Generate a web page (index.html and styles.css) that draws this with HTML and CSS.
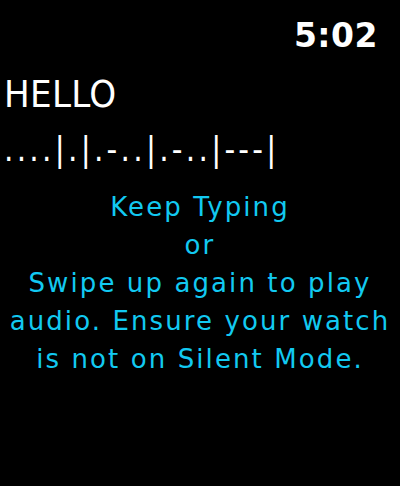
FILE: index.html
```html
<!DOCTYPE html>
<html>
<head>
<meta charset="utf-8">
<link rel="stylesheet" href="styles.css">
</head>
<body>
<div class="screen">
  <div class="status"><span class="time">5:02</span></div>
  <div class="word">HELLO</div>
  <div class="morse">....|.|.-..|.-..|---|</div>
  <div class="hint">
    <div>Keep Typing</div>
    <div>or</div>
    <div>Swipe up again to play</div>
    <div>audio. Ensure your watch</div>
    <div>is not on Silent Mode.</div>
  </div>
</div>
</body>
</html>
```
FILE: styles.css
```css
html, body {
  margin: 0;
  padding: 0;
  background: #000;
}
.screen {
  width: 400px;
  height: 486px;
  background: #000;
  color: #fff;
  font-family: "DejaVu Sans Condensed", "DejaVu Sans", sans-serif;
  overflow: hidden;
}
.status {
  display: flex;
  justify-content: flex-end;
  padding: 16px 22px 0 0;
  height: 40px;
}
.time {
  font-family: "DejaVu Sans", sans-serif;
  font-weight: bold;
  font-size: 33px;
  line-height: 40px;
  letter-spacing: 0.5px;
}
.word {
  font-size: 38px;
  line-height: 44px;
  padding-left: 4px;
  margin-top: 16px;
  letter-spacing: 0.3px;
}
.morse {
  font-size: 33px;
  line-height: 40px;
  padding-left: 4px;
  margin-top: 14px;
  letter-spacing: 3.25px;
}
.hint {
  color: #12c9f1;
  font-family: "DejaVu Sans", sans-serif;
  font-size: 26px;
  letter-spacing: 2.1px;
  line-height: 38px;
  text-align: center;
  margin-top: 18px;
}
```
